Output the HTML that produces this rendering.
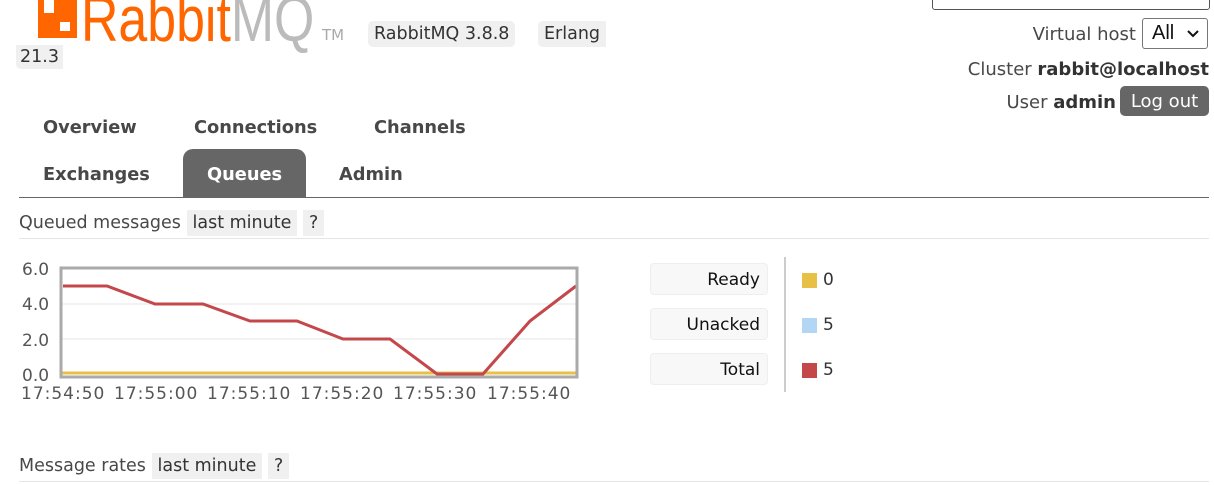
<!DOCTYPE html>
<html><head><meta charset="utf-8"><style>
body{margin:0;width:1214px;height:485px;overflow:hidden;background:#fff;font-family:"DejaVu Sans",Verdana,sans-serif;color:#484848;position:relative}
.a{position:absolute;white-space:nowrap}
.pill{background:#f0f0f0;border-radius:5px;padding:3px 6px;font-size:17.5px;color:#333}
.tab{position:absolute;font-weight:bold;font-size:17.8px;color:#484848}
.lbl{position:absolute;left:650px;width:118px;height:32px;background:#f8f8f8;border:1px solid #eee;border-radius:4px;box-sizing:border-box;text-align:right;padding-right:7px;line-height:33px;font-size:17px;color:#111}
.sw{position:absolute;left:802px;width:15px;height:15px}
.v{position:absolute;left:823px;font-size:17px;color:#333}
</style></head><body>
<svg class="a" style="left:38px;top:0" width="40" height="39"><path d="M0 0H6V13H16V0H39V38H0Z" fill="#f60"/><rect x="22" y="22" width="10" height="9" fill="#fff"/></svg>
<div class="a" style="left:81px;top:-18px;font-size:64px;font-family:'Liberation Sans',sans-serif;transform:scaleX(0.81);transform-origin:0 0"><span style="color:#f60">Rabbit</span><span style="color:#bbb">MQ</span></div>
<div class="a" style="left:322px;top:26px;font-size:15px;color:#aaa">TM</div>
<div class="a pill" style="left:368px;top:21px">RabbitMQ 3.8.8</div>
<div class="a pill" style="left:538px;top:21px;border-radius:5px 0 0 5px">Erlang</div>
<div class="a pill" style="left:16px;top:45px;padding:2px 4px;border-radius:0 0 0 5px">21.3</div>
<div class="a" style="left:932px;top:-20px;width:276px;height:28px;border:1px solid #555;border-radius:3px"></div>
<div class="a" style="right:78px;top:24px;font-size:18px">Virtual host</div>
<div class="a" style="left:1142px;top:18px;width:66px;height:31px;border:1px solid #777;border-radius:3px;box-sizing:border-box;font-size:20px;color:#111;padding-left:9px;line-height:29px;font-family:'Liberation Sans',sans-serif">All <svg width="14" height="10" style="margin-left:6px"><path d="M2 2L7 7L12 2" fill="none" stroke="#111" stroke-width="2"/></svg></div>
<div class="a" style="right:5px;top:59px;font-size:18px">Cluster <b style="color:#333">rabbit@localhost</b></div>
<div class="a" style="right:98px;top:92px;font-size:18px">User <b style="color:#333">admin</b></div>
<div class="a" style="left:1120px;top:86px;width:89px;height:30px;background:#666;color:#fff;border-radius:5px;font-size:18px;text-align:center;line-height:32px">Log out</div>
<div class="tab" style="left:43px;top:117px">Overview</div>
<div class="tab" style="left:194px;top:117px">Connections</div>
<div class="tab" style="left:374px;top:117px">Channels</div>
<div class="tab" style="left:43px;top:164px">Exchanges</div>
<div class="a" style="left:183px;top:149px;width:123px;height:48px;background:#666;border-radius:10px 10px 0 0"></div>
<div class="tab" style="left:207px;top:164px;color:#fff">Queues</div>
<div class="tab" style="left:339px;top:164px">Admin</div>
<div class="a" style="left:19px;top:197px;width:1190px;height:1px;background:#666"></div>
<div class="a" style="left:19px;top:213px;font-size:17.5px">Queued messages <span class="pill" style="border-radius:0;padding:3px 6px">last minute</span> <span class="pill" style="border-radius:0;padding:3px 6px">?</span></div>
<div class="a" style="left:19px;top:238px;width:1190px;height:1px;background:#e4e4e4"></div>
<svg class="a" style="left:0;top:255px" width="600" height="150" font-family="DejaVu Sans,sans-serif" font-size="17" fill="#555">
<line x1="62" y1="49" x2="576" y2="49" stroke="#eee" stroke-width="1.5"/>
<line x1="62" y1="84" x2="576" y2="84" stroke="#eee" stroke-width="1.5"/>
<line x1="62" y1="118" x2="576" y2="118" stroke="#e8c046" stroke-width="3"/>
<polyline fill="none" stroke="#c4484a" stroke-width="3" points="63,31 107,31 155,49 203,49 250,66 297,66 343,84 390,84 437,119 483,119 530,66 576,31"/>
<rect x="61" y="13" width="516" height="109" fill="none" stroke="#aaa" stroke-width="3"/>
<text x="22" y="20">6.0</text><text x="22" y="55">4.0</text><text x="22" y="91">2.0</text><text x="22" y="126">0.0</text>
<g letter-spacing="1"><text x="21" y="144">17:54:50</text><text x="114" y="144">17:55:00</text><text x="207" y="144">17:55:10</text><text x="300" y="144">17:55:20</text><text x="393" y="144">17:55:30</text><text x="487" y="144">17:55:40</text></g>
</svg>
<div class="lbl" style="top:263px">Ready</div>
<div class="lbl" style="top:308px">Unacked</div>
<div class="lbl" style="top:353px">Total</div>
<div class="a" style="left:784px;top:257px;width:2px;height:135px;background:#ccc"></div>
<div class="sw" style="top:273px;background:#e8c046"></div><div class="v" style="top:270px">0</div>
<div class="sw" style="top:318px;background:#b3d6f5"></div><div class="v" style="top:315px">5</div>
<div class="sw" style="top:363px;background:#c4484a"></div><div class="v" style="top:360px">5</div>
<div class="a" style="left:19px;top:456px;font-size:17.5px">Message rates <span class="pill" style="border-radius:0;padding:3px 6px">last minute</span> <span class="pill" style="border-radius:0;padding:3px 6px">?</span></div>
<div class="a" style="left:19px;top:481px;width:1190px;height:1px;background:#e4e4e4"></div>
</body></html>
